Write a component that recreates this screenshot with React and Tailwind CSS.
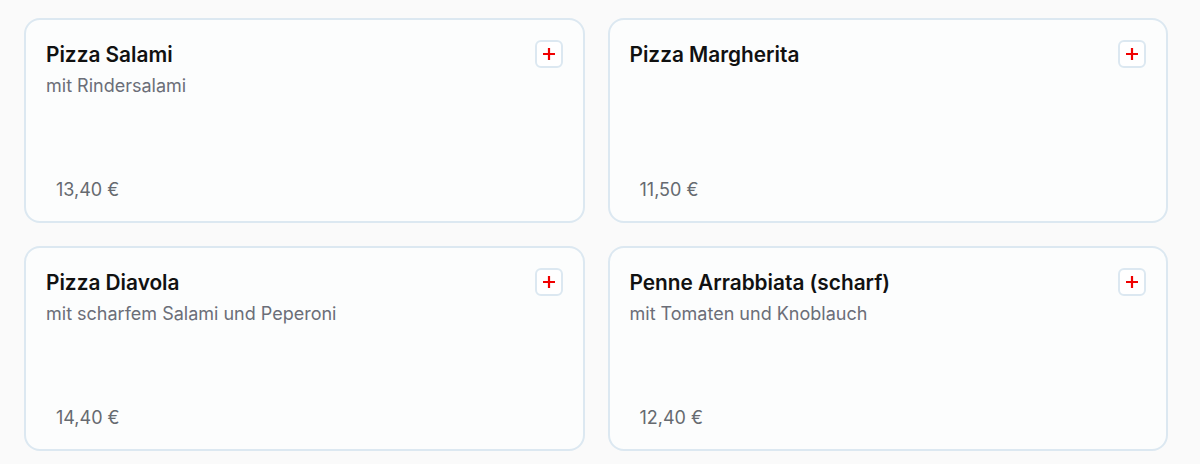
const ITEMS = [
  { name: "Pizza Salami", desc: "mit Rindersalami", price: "13,40 €" },
  { name: "Pizza Margherita", desc: "", price: "11,50 €" },
  { name: "Pizza Diavola", desc: "mit scharfem Salami und Peperoni", price: "14,40 €" },
  { name: "Penne Arrabbiata (scharf)", desc: "mit Tomaten und Knoblauch", price: "12,40 €" },
];

function MenuCard({ item }) {
  return (
    <div className="flex h-[205px] flex-col rounded-2xl border-2 border-[#dce8f1] bg-[#fcfdfd] px-5 pt-5 pb-[19px]">
      <div className="flex items-start justify-between gap-3">
        <div className="flex flex-col">
          <h3 className="pt-[1px] text-[20.8px] leading-7 font-semibold text-[#111]">{item.name}</h3>
          {item.desc && <p className="mt-[5px] text-[18px] leading-6 text-[#6b6e78]">{item.desc}</p>}
        </div>
        <button className="flex h-7 w-7 shrink-0 items-center justify-center rounded-md border-2 border-[#dce8f1] bg-white">
          <svg width="14" height="14" viewBox="0 0 14 14">
            <path d="M7 1v12M1 7h12" stroke="#f00000" strokeWidth="2.2" />
          </svg>
        </button>
      </div>
      <div className="mt-auto pl-[10px] text-[18px] leading-6 text-[#666a70]">{item.price}</div>
    </div>
  );
}

export default function App() {
  return (
    <div className="min-h-[464px] bg-[#fafafa] px-6 pt-[18px]" style={{ fontFamily: "Inter, 'Noto Sans', sans-serif" }}>
      <div className="grid w-[1144px] grid-cols-2 gap-x-[23px] gap-y-[23px]">
        {ITEMS.map((item) => (
          <MenuCard key={item.name} item={item} />
        ))}
      </div>
    </div>
  );
}
